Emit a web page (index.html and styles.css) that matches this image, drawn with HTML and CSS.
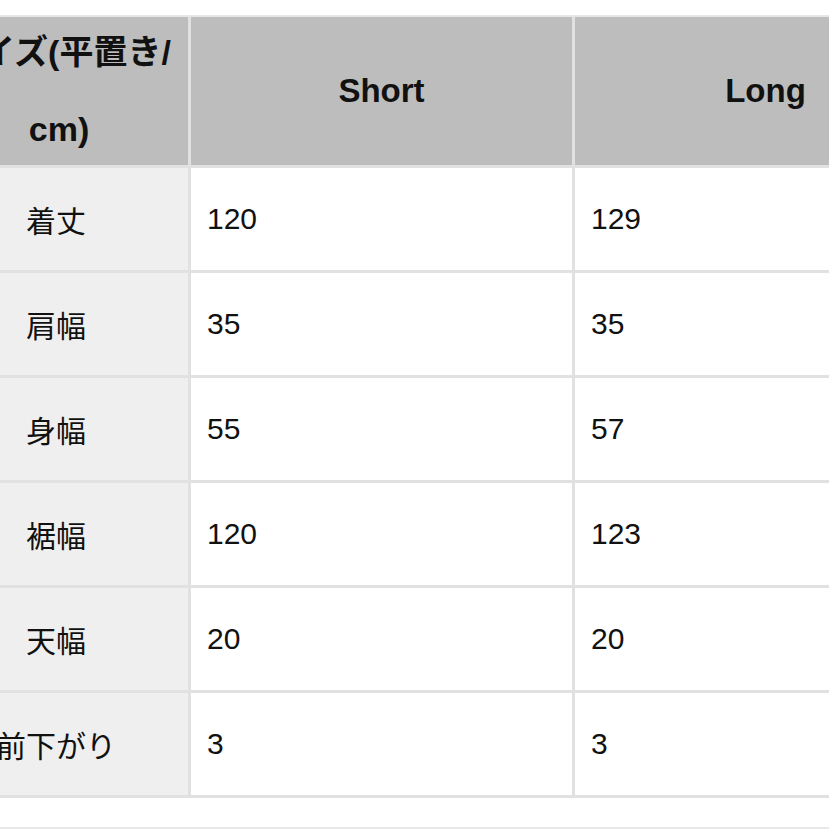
FILE: index.html
```html
<!DOCTYPE html>
<html lang="ja">
<head>
<meta charset="utf-8">
<link rel="stylesheet" href="styles.css">
</head>
<body>
<div class="page">
  <div class="size-table">
    <div class="cell head label"><span>サイズ(平置き/</span><span>cm)</span></div>
    <div class="cell head">Short</div>
    <div class="cell head">Long</div>

    <div class="cell label">着丈</div>
    <div class="cell val">120</div>
    <div class="cell val">129</div>

    <div class="cell label">肩幅</div>
    <div class="cell val">35</div>
    <div class="cell val">35</div>

    <div class="cell label">身幅</div>
    <div class="cell val">55</div>
    <div class="cell val">57</div>

    <div class="cell label">裾幅</div>
    <div class="cell val">120</div>
    <div class="cell val">123</div>

    <div class="cell label">天幅</div>
    <div class="cell val">20</div>
    <div class="cell val">20</div>

    <div class="cell label">前下がり</div>
    <div class="cell val">3</div>
    <div class="cell val">3</div>
  </div>
  <div class="next-rule"></div>
</div>
</body>
</html>
```

FILE: styles.css
```css
html, body {
  margin: 0;
  padding: 0;
  background: #ffffff;
  overflow: hidden;
}

.page {
  padding-top: 15px;
  font-family: "Liberation Sans", "Noto Sans CJK JP", sans-serif;
  color: #111111;
}

.size-table {
  display: grid;
  grid-template-columns: 264px 381px 381px;
  grid-template-rows: 148px repeat(6, 102px);
  gap: 3px;
  width: max-content;
  margin-left: -79px;
  background: #e1e1e1;
  border-top: 2px solid #e6e6e6;
  border-left: 3px solid #e1e1e1;
  border-right: 3px solid #e1e1e1;
  border-bottom: 3px solid #e1e1e1;
}

.cell {
  display: flex;
  align-items: center;
  background: #ffffff;
  font-size: 30px;
  white-space: nowrap;
  overflow: visible;
}

.cell.label {
  background: #efefef;
  justify-content: center;
}

.cell.val {
  padding-left: 16px;
}

.cell.head {
  background: #bdbdbd;
  justify-content: center;
  font-weight: bold;
  font-size: 33px;
}

.cell.head.label {
  flex-direction: column;
  justify-content: center;
  line-height: 77px;
  font-size: 34px;
  padding-left: 6px;
  background: #bdbdbd;
}

.next-rule {
  margin-top: 29px;
  height: 2px;
  background: #e8e8e8;
}
```
